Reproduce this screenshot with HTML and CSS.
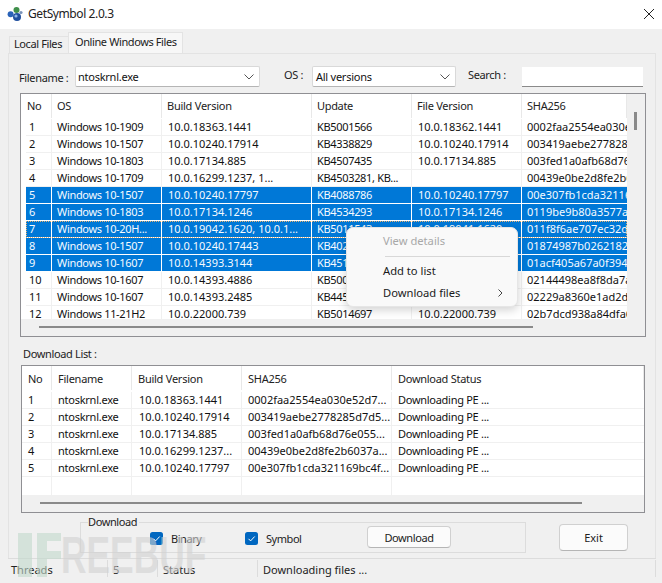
FILE: index.html
```html
<!DOCTYPE html>
<html lang="en">
<head>
<meta charset="utf-8">
<title>GetSymbol 2.0.3</title>
<link rel="stylesheet" href="styles.css">
</head>
<body>
<div class="window">
  <header class="titlebar">
    <svg class="app-icon" width="16" height="16" viewBox="0 0 16 16"><circle cx="3.6" cy="8.2" r="3" fill="#2a63b8"/><circle cx="9.5" cy="4" r="3" fill="#3f8f4a"/><circle cx="10" cy="11" r="4" fill="#1f4f9e"/><circle cx="9" cy="10" r="1.6" fill="#8fb6e8"/><circle cx="14" cy="6.5" r="1.6" fill="#7a93b8"/></svg>
    <span class="app-title">GetSymbol 2.0.3</span>
    <svg class="close" width="10" height="10" viewBox="0 0 10 10"><path d="M0 0L10 10M10 0L0 10" stroke="#222" stroke-width="1" fill="none"/></svg>
  </header>
  <nav class="tabs">
    <span class="tab">Local Files</span>
    <span class="tab active">Online Windows Files</span>
  </nav>
  <main class="panel">
    <div class="filters">
      <label class="lbl lbl-file">Filename :</label>
      <div class="combo combo-file">ntoskrnl.exe<svg width="10" height="6" viewBox="0 0 10 6"><path d="M.5.5L5 5 9.5.5" stroke="#555" fill="none"/></svg></div>
      <label class="lbl lbl-os">OS :</label>
      <div class="combo combo-os">All versions<svg width="10" height="6" viewBox="0 0 10 6"><path d="M.5.5L5 5 9.5.5" stroke="#555" fill="none"/></svg></div>
      <label class="lbl lbl-search">Search :</label>
      <div class="search"></div>
    </div>
    <section class="list list-main">
      <div class="list-body">
        <div class="row head"><span>No</span><span>OS</span><span>Build Version</span><span>Update</span><span>File Version</span><span>SHA256</span></div>
        <div class="row"><span>1</span><span>Windows 10-1909</span><span>10.0.18363.1441</span><span>KB5001566</span><span>10.0.18362.1441</span><span>0002faa2554ea030e</span></div>
        <div class="row"><span>2</span><span>Windows 10-1507</span><span>10.0.10240.17914</span><span>KB4338829</span><span>10.0.10240.17914</span><span>003419aebe2778285</span></div>
        <div class="row"><span>3</span><span>Windows 10-1803</span><span>10.0.17134.885</span><span>KB4507435</span><span>10.0.17134.885</span><span>003fed1a0afb68d76</span></div>
        <div class="row"><span>4</span><span>Windows 10-1709</span><span>10.0.16299.1237, 1...</span><span>KB4503281, KB...</span><span></span><span>00439e0be2d8fe2b6</span></div>
        <div class="row sel"><span>5</span><span>Windows 10-1507</span><span>10.0.10240.17797</span><span>KB4088786</span><span>10.0.10240.17797</span><span>00e307fb1cda32116</span></div>
        <div class="row sel"><span>6</span><span>Windows 10-1803</span><span>10.0.17134.1246</span><span>KB4534293</span><span>10.0.17134.1246</span><span>0119be9b80a3577ac</span></div>
        <div class="row sel focus"><span>7</span><span>Windows 10-20H...</span><span>10.0.19042.1620, 10.0.1...</span><span>KB5011543</span><span>10.0.19041.1620</span><span>011f8f6ae707ec32da</span></div>
        <div class="row sel"><span>8</span><span>Windows 10-1507</span><span>10.0.10240.17443</span><span>KB402</span><span></span><span>01874987b02621824</span></div>
        <div class="row sel"><span>9</span><span>Windows 10-1607</span><span>10.0.14393.3144</span><span>KB451</span><span></span><span>01acf405a67a0f394</span></div>
        <div class="row"><span>10</span><span>Windows 10-1607</span><span>10.0.14393.4886</span><span>KB500</span><span></span><span>02144498ea8f8da7a</span></div>
        <div class="row"><span>11</span><span>Windows 10-1607</span><span>10.0.14393.2485</span><span>KB445</span><span></span><span>02229a8360e1ad2d5</span></div>
        <div class="row"><span>12</span><span>Windows 11-21H2</span><span>10.0.22000.739</span><span>KB5014697</span><span>10.0.22000.739</span><span>02b7dcd938a84dfa6</span></div>
      </div>
      <div class="vbar"><i></i></div>
      <div class="hbar"><i></i></div>
    </section>
    <p class="dl-label">Download List :</p>
    <section class="list list-dl">
      <div class="list-body">
        <div class="row head"><span>No</span><span>Filename</span><span>Build Version</span><span>SHA256</span><span>Download Status</span></div>
        <div class="row"><span>1</span><span>ntoskrnl.exe</span><span>10.0.18363.1441</span><span>0002faa2554ea030e52d7...</span><span>Downloading PE ...</span></div>
        <div class="row"><span>2</span><span>ntoskrnl.exe</span><span>10.0.10240.17914</span><span>003419aebe2778285d7d5...</span><span>Downloading PE ...</span></div>
        <div class="row"><span>3</span><span>ntoskrnl.exe</span><span>10.0.17134.885</span><span>003fed1a0afb68d76e055...</span><span>Downloading PE ...</span></div>
        <div class="row"><span>4</span><span>ntoskrnl.exe</span><span>10.0.16299.1237...</span><span>00439e0be2d8fe2b6037a...</span><span>Downloading PE ...</span></div>
        <div class="row"><span>5</span><span>ntoskrnl.exe</span><span>10.0.10240.17797</span><span>00e307fb1cda321169bc4f...</span><span>Downloading PE ...</span></div>
        <div class="row filler"><span></span><span></span><span></span><span></span><span></span></div>
      </div>
      <div class="hbar"><i></i></div>
    </section>
    <div class="actions">
      <div class="group">
        <span class="group-title">Download</span>
        <label class="check check-bin"><svg width="13" height="13" viewBox="0 0 13 13"><rect width="13" height="13" rx="2.5" fill="#0067c0"/><path d="M3.5 6.8L5.6 8.9 9.7 4.5" stroke="#fff" fill="none"/></svg>Binary</label>
        <label class="check check-sym"><svg width="13" height="13" viewBox="0 0 13 13"><rect width="13" height="13" rx="2.5" fill="#0067c0"/><path d="M3.5 6.8L5.6 8.9 9.7 4.5" stroke="#fff" fill="none"/></svg>Symbol</label>
        <button class="btn btn-dl">Download</button>
      </div>
      <button class="btn btn-exit">Exit</button>
    </div>
  </main>
  <footer class="status">
    <span class="s1">Threads</span><span class="s2">5</span><span class="s3">Status</span><span class="s4">Downloading files ...</span>
  </footer>
  <div class="menu">
    <div class="mi disabled">View details</div>
    <div class="sep"></div>
    <div class="mi">Add to list</div>
    <div class="mi sub">Download files<svg width="5" height="8" viewBox="0 0 5 8"><path d="M.5.5L4 4 .5 7.5" stroke="#444" fill="none"/></svg></div>
  </div>
  <div class="watermark"><i class="wm-l"></i><i class="wm-f"></i><span>REEBUF</span></div>
</div>
</body>
</html>
```
FILE: styles.css
```css
* { box-sizing: border-box; }
html, body { margin: 0; padding: 0; }
body { font-family: "Noto Sans", "Open Sans", sans-serif; font-size: 11px; color: #111; }
.window { position: relative; width: 662px; height: 583px; overflow: hidden; background: #f0f0f0; display: flex; flex-direction: column; }
.titlebar { height: 29px; flex: none; background: #fff; display: flex; align-items: center; padding: 0 8px 2px 7px; }
.app-icon { flex: none; }
.app-title { margin-left: 5px; font-size: 12px; letter-spacing: -.4px; color: #222; }
.close { margin-left: auto; }
.tabs { height: 24px; flex: none; display: flex; align-items: flex-end; padding: 3px 0 0 9px; white-space: nowrap; letter-spacing: -.4px; }
.tab { height: 17px; width: 59px; line-height: 14px; padding-left: 4px; background: #f0f0f0; border: 1px solid #e3e3e3; border-bottom: 0; border-right: 0; color: #222; }
.tab.active { height: 21px; width: 115px; line-height: 18px; padding-left: 6px; background: #f7f7f7; border: 1px solid #e3e3e3; border-bottom: 0; }
.panel { flex: 1; margin-left: 8px; margin-right: 6px; border-top: 1px solid #e3e3e3; border-left: 1px solid #e3e3e3; border-right: 1px solid #e3e3e3; padding: 12px 0 0 10px; min-height: 0; display: flex; flex-direction: column; }
.filters { height: 26px; flex: none; display: flex; align-items: flex-start; }
.lbl { color: #222; line-height: 15px; letter-spacing: -.35px; white-space: nowrap; }
.lbl-file { width: 56px; padding-top: 4px; }
.lbl-os { width: 28px; margin-left: 24px; padding-top: 1px; }
.lbl-search { width: 54px; margin-left: 12px; padding-top: 1px; }
.combo { height: 21px; background: #fff; border: 1px solid #d9d9d9; border-bottom-color: #b5b5b5; border-radius: 2px; display: flex; align-items: center; justify-content: space-between; padding: 0 5px 0 3px; letter-spacing: -.25px; }
.combo-file { width: 185px; padding-left: 2px; }
.combo-os { width: 144px; }
.search { width: 121px; height: 20px; margin-top: 1px; background: #fff; border-bottom: 1px solid #8a8a8a; }
.list { position: relative; background: #fff; border: 1px solid #8f8f93; flex: none; overflow: hidden; }
.list-main { width: 626px; height: 244px; margin: 1px 0 0 1px; }
.list-dl { width: 624px; height: 148px; margin-left: 2px; }
.list-body { height: 225px; overflow: hidden; padding-left: 5px; }
.list-dl .list-body { height: 129px; padding-left: 0; }
.row { display: grid; height: 17px; line-height: 15px; white-space: nowrap; border-bottom: 1px solid #f0f0f0; }
.list-main .row { grid-template-columns: 26px 110px 150px 100px 110px 105px; width: 601px; }
.list-dl .row { grid-template-columns: 30px 80px 110px 150px 1fr; }
.row span { overflow: hidden; padding-left: 3px; border-right: 1px solid #f0f0f0; }
.row span:nth-child(n+2) { padding-left: 5px; }
.list-main .row span:nth-child(2), .list-main .row span:nth-child(4) { letter-spacing: -.33px; }
.list-main .row span:nth-child(3), .list-main .row span:nth-child(5) { padding-left: 6px; }
.list-dl .row span:first-child { padding-left: 6px; }
.list-dl .row span:nth-child(2) { padding-left: 6px; letter-spacing: -.25px; }
.list-dl .row span:nth-child(3) { padding-left: 7px; }
.list-dl .row span:nth-child(4) { padding-left: 6px; }
.list-dl .row span:nth-child(5) { padding-left: 6px; letter-spacing: -.28px; }
.row span:last-child { border-right: 0; }
.row.head { line-height: 24px; border-bottom: 0; color: #222; }
.list-main .row.head { height: 25px; }
.list-dl .row.head { height: 26px; line-height: 26px; }
.row.head span { border-right: 1px solid #e8e8e8; height: 24px; letter-spacing: -.25px; padding-left: 5px; }
.list-main .row.head span:first-child { padding-left: 1px; }
.list-main .row.head span:nth-child(3), .list-main .row.head span:nth-child(5) { padding-left: 5px; }
.list-dl .row.head span:nth-child(3) { padding-left: 6px; }
.row.sel { background: #0078d7; color: #f5faff; border-bottom-color: #fff; }
.row.sel span { border-right-color: #fff; }
.row.focus { outline: 1px dotted #e6b070; outline-offset: -1px; }
.row.filler { height: 21px; }
.vbar { position: absolute; right: 0; top: 0; width: 18px; height: 225px; background: #f0f0f0; }
.vbar i { display: block; width: 3px; height: 18px; margin: 18px 0 0 7px; background: #8a8a8a; }
.hbar { height: 17px; background: #f0f0f0; padding-top: 7px; }
.hbar i { display: block; height: 2px; background: #8a8a8a; }
.list-main .hbar i { width: 494px; margin-left: 18px; }
.list-dl .hbar i { width: 542px; margin-left: 18px; }
.dl-label { margin: 10px 0 4px 4px; height: 14px; line-height: 14px; color: #222; letter-spacing: -.35px; }
.actions { display: flex; align-items: flex-start; margin-top: 8px; }
.group { position: relative; display: flex; align-items: flex-start; width: 446px; height: 31px; margin: 1px 0 0 61px; border: 1px solid #dcdcdc; }
.group-title { position: absolute; left: 7px; top: -8px; padding-right: 2px; background: #f0f0f0; line-height: 14px; color: #222; letter-spacing: -.4px; }
.check { display: flex; align-items: center; gap: 8px; color: #222; margin-top: 8px; height: 15px; letter-spacing: -.45px; }
.check-bin { margin-left: 69px; width: 95px; }
.check-sym { width: 122px; }
.btn { font: inherit; letter-spacing: -.4px; color: #222; background: #fbfbfb; border: 1px solid #d0d0d0; border-bottom-color: #b5b5b5; border-radius: 4px; padding: 0; }
.btn-dl { width: 84px; height: 22px; margin-top: 3px; }
.btn-exit { width: 69px; height: 27px; margin: 3px 0 0 33px; letter-spacing: 0; }
.status { height: 25px; flex: none; margin-left: 8px; margin-right: 6px; border-top: 1px solid #dcdcdc; display: grid; grid-template-columns: 100px 50px 100px 1fr; color: #222; }
.status span { padding-left: 3px; border-right: 1px solid #dcdcdc; height: 17px; margin-top: 1px; line-height: 19px; }
.status .s2, .status .s3, .status .s4 { padding-left: 5px; }
.menu { position: absolute; left: 346px; top: 227px; width: 172px; height: 80px; background: #f9f9f9; border: 1px solid #e6e6e6; border-radius: 7px; box-shadow: 0 3px 10px rgba(0,0,0,.18); padding: 2px 0 0 36px; color: #1a1a1a; font-size: 11.2px; }
.mi { height: 22px; line-height: 22px; }
.mi.disabled { color: #a8a8a8; margin-bottom: 4px; }
.sep { height: 1px; width: 125px; margin-left: 2px; background: #d8d8d8; margin-bottom: 3px; }
.sub { display: flex; align-items: center; justify-content: space-between; width: 120px; }
.watermark { position: absolute; left: 18px; top: 533px; height: 44px; display: flex; align-items: center; pointer-events: none; opacity: .6; }
.wm-l { display: block; width: 14px; height: 44px; background: #c2dacc; }
.wm-f { display: block; width: 24px; height: 44px; margin-left: 5px; background: linear-gradient(#c2dacc 0 8px, transparent 8px 18px, #c2dacc 18px 26px, transparent 26px), linear-gradient(90deg, #c2dacc 0 10px, transparent 10px); }
.watermark span { font-family: "Liberation Sans", sans-serif; font-weight: 700; font-size: 52px; color: #d2d2d2; line-height: 44px; transform: scaleX(.68); transform-origin: left center; }
```
